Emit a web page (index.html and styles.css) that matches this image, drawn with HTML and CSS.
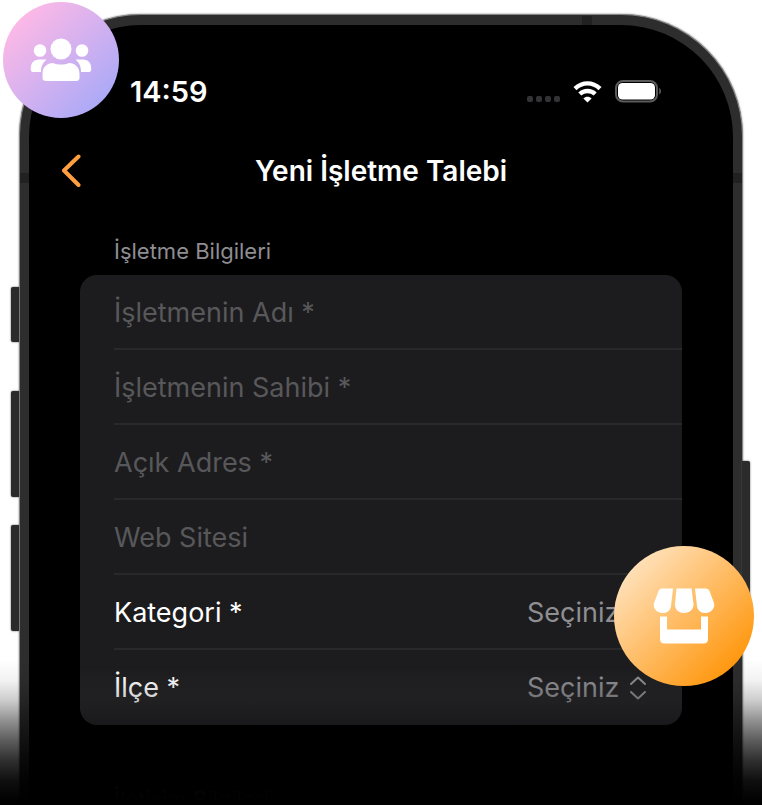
FILE: index.html
```html
<!DOCTYPE html>
<html lang="tr">
<head>
<meta charset="utf-8">
<meta name="viewport" content="width=device-width, initial-scale=1">
<title>Yeni İşletme Talebi</title>
<link rel="stylesheet" href="styles.css">
</head>
<body>
<main class="stage">
  <div class="phone">
    <span class="key key-action"></span>
    <span class="key key-up"></span>
    <span class="key key-down"></span>
    <span class="key key-power"></span>
    <span class="band band-top"></span>
    <span class="band band-left"></span>
    <span class="band band-right"></span>
    <div class="screen">
      <div class="status">
        <span class="time">14:59</span>
        <svg class="dots" width="34" height="8" viewBox="0 0 34 8" fill="#333335"><rect x="0" y="1" width="6" height="6" rx="2"/><rect x="9" y="1" width="6" height="6" rx="2"/><rect x="18" y="1" width="6" height="6" rx="2"/><rect x="27" y="1" width="6" height="6" rx="2"/></svg>
        <svg class="wifi" width="30" height="22" viewBox="0 0 30 22" fill="none" stroke="#fff" stroke-width="4.400"><path d="M2 7.600C9.500.6 19.500.6 27 7.600"/><path d="M6.800 13C11.200 8.900 17.800 8.900 22.200 13"/><path d="M14.500 21.600L10.400 17.500C12.700 15.300 16.300 15.300 18.600 17.500Z" fill="#fff" stroke="none"/></svg>
        <svg class="battery" width="47" height="24" viewBox="0 0 47 24"><rect x="1" y="1" width="41" height="20.500" rx="7" fill="none" stroke="#5c5a5c" stroke-width="2"/><rect x="3" y="3" width="37" height="16.500" rx="4.500" fill="#fff"/><path d="M44.200 8C46.600 9.300 46.600 13.200 44.200 14.500Z" fill="#5c5a5c"/></svg>
      </div>
      <header class="nav">
        <button class="back" type="button" aria-label="Geri"><svg width="22" height="34" viewBox="0 0 22 34" fill="none" stroke="#ff9f40" stroke-width="4" stroke-linecap="round" stroke-linejoin="round"><path d="M17.500 2.500L3 16.500L17.500 31"/></svg></button>
        <h1>Yeni İşletme Talebi</h1>
      </header>
      <form>
        <h2>İşletme Bilgileri</h2>
        <div class="card">
          <div class="row"><input type="text" placeholder="İşletmenin Adı *" aria-label="İşletmenin Adı"></div>
          <div class="row"><input type="text" placeholder="İşletmenin Sahibi *" aria-label="İşletmenin Sahibi"></div>
          <div class="row"><input type="text" placeholder="Açık Adres *" aria-label="Açık Adres"></div>
          <div class="row"><input type="text" placeholder="Web Sitesi" aria-label="Web Sitesi"></div>
          <div class="row">
            <label for="category">Kategori *</label>
            <select id="category"><option>Seçiniz</option></select>
            <svg width="18" height="24" viewBox="0 0 18 24" fill="none" stroke="#8e8e93" stroke-width="2" stroke-linecap="round" stroke-linejoin="round"><path d="M2 8L9 1.500L16 8M2 16L9 22.500L16 16"/></svg>
          </div>
          <div class="row">
            <label for="district">İlçe *</label>
            <select id="district"><option>Seçiniz</option></select>
            <svg width="18" height="24" viewBox="0 0 18 24" fill="none" stroke="#8e8e93" stroke-width="2" stroke-linecap="round" stroke-linejoin="round"><path d="M2 8L9 1.500L16 8M2 16L9 22.500L16 16"/></svg>
          </div>
        </div>
        <h2 class="next">İletişim Bilgileri</h2>
      </form>
    </div>
  </div>
  <div class="fade"></div>
  <div class="badge people">
    <svg width="62" height="44" viewBox="0 0 62 44" fill="#fff"><circle cx="31" cy="11" r="10.500"/><circle cx="10" cy="12.500" r="6.300"/><circle cx="52" cy="12.500" r="6.300"/><path d="M16 43C14 43 12.500 42 12.500 40V36C12.500 29 17 25 23 25C28 27 34 27 39 25C45 25 49.500 29 49.500 36V40C49.500 42 48 43 46 43Z"/><path d="M11 34H3C1.500 34 .8 33 .8 31.500V30C.8 25 4 21.500 9 21.500H16.500C13 24.500 11 28 11 34Z"/><path d="M51 34H59C60.500 34 61.200 33 61.200 31.500V30C61.200 25 58 21.500 53 21.500H45.500C49 24.500 51 28 51 34Z"/></svg>
  </div>
  <div class="badge store">
    <svg width="62" height="56" viewBox="0 0 62 56" fill="#fff"><path d="M9 .5H20L18 18C17.500 22 14.500 25 10.500 25C4 25-.5 20 1 15L5.500 3C6 1.500 7.500.5 9 .5Z"/><path d="M23.500.5H38.500L40.500 16C41 21 36.500 25 31 25C25.500 25 21.500 21 22 16Z"/><path d="M42 .5H53C54.500.5 56 1.500 56.500 3L61 15C62.500 20 58 25 51.500 25C47.500 25 44.500 22 44 18Z"/><path d="M7 28.500H14V41.500H48V28.500H55V51C55 54 53.500 55.500 50.500 55.500H11.500C8.500 55.500 7 54 7 51Z"/></svg>
  </div>
</main>
</body>
</html>
```
FILE: styles.css
```css
* {
  box-sizing: border-box;
}

body {
  margin: 0;
  background: #fff;
  font-family: Inter, "Liberation Sans", sans-serif;
}

.stage {
  position: relative;
  height: 100vh;
  padding: 14px 19px 0;
  overflow: hidden;
}

.phone {
  position: relative;
  min-height: 100vh;
  padding: 10px 9px 0;
  border: 1px solid #858585;
  border-bottom: 0;
  border-radius: 122px 122px 0 0;
  background: #2d2d2d;
  box-shadow: 0 0 2px #777;
}

.screen {
  min-height: 100vh;
  border-radius: 112px 112px 0 0;
  background: #000;
  color: #fff;
}

/* Side keys and antenna bands of the device frame */
.key {
  position: absolute;
  width: 8px;
  background: #2b2b2b;
  box-shadow: 0 0 2px #555;
}

.key-action,
.key-up,
.key-down {
  left: -9px;
  border-radius: 2px 0 0 2px;
}

.key-action {
  top: 272px;
  height: 55px;
}

.key-up {
  top: 376px;
  height: 106px;
}

.key-down {
  top: 510px;
  height: 106px;
}

.key-power {
  top: 446px;
  right: -8px;
  height: 172px;
  border-radius: 0 2px 2px 0;
}

.band {
  position: absolute;
  background: #212121;
}

.band-top {
  top: 1px;
  right: 150px;
  width: 10px;
  height: 9px;
}

.band-left,
.band-right {
  top: 158px;
  width: 9px;
  height: 10px;
}

.band-left {
  left: 0;
}

.band-right {
  right: 0;
}

.status {
  display: flex;
  align-items: center;
  padding: 50px 71px 0 101px;
}

.time {
  flex: 1;
  font-size: 29px;
  font-weight: 600;
  line-height: 34px;
}

.dots {
  margin: 14px 12px 0 0;
}

.wifi {
  margin-right: 12px;
}

.nav {
  display: grid;
  grid-template-columns: 40px 1fr 40px;
  align-items: center;
  margin-top: 45px;
  padding: 0 32px;
}

.back {
  display: flex;
  padding: 0;
  border: 0;
  background: none;
}

h1 {
  margin: 0;
  font-size: 28px;
  font-weight: 600;
  line-height: 34px;
  text-align: center;
  white-space: nowrap;
}

form {
  padding: 49px 51px 0;
}

h2 {
  margin: 0 0 10px;
  padding-left: 34px;
  color: #8e8e93;
  font-size: 22px;
  font-weight: 400;
  line-height: 28px;
}

.card {
  border-radius: 17px;
  background: linear-gradient(#1c1c1e 87%, #303033);
}

.row {
  display: flex;
  align-items: center;
  height: 75px;
  margin-left: 34px;
  padding: 2px 35px 0 0;
  border-bottom: 2px solid #29292b;
  font-size: 27px;
}

.row:last-child {
  border-bottom-color: transparent;
}

.row label {
  flex: 1;
}

.row input,
.row select {
  padding: 0;
  border: 0;
  outline: 0;
  background: none;
  font: inherit;
}

.row input {
  width: 100%;
  color: #fff;
}

.row input::placeholder {
  color: #58585b;
  opacity: 1;
}

.row select {
  margin-right: 9px;
  appearance: none;
  color: #8e8e93;
}

.next {
  margin-top: 60px;
}

.fade {
  position: absolute;
  inset: auto 0 0;
  height: 145px;
  background: linear-gradient(
    rgb(0 0 0 / 0),
    rgb(0 0 0 / 0.05) 14%,
    rgb(0 0 0 / 0.2) 28%,
    rgb(0 0 0 / 0.42) 41%,
    rgb(0 0 0 / 0.63) 55%,
    rgb(0 0 0 / 0.81) 69%,
    rgb(0 0 0 / 0.94) 83%,
    #000 98%
  );
  pointer-events: none;
}

.badge {
  position: absolute;
  display: flex;
  align-items: center;
  justify-content: center;
  border-radius: 50%;
}

.people {
  top: 2px;
  left: 3px;
  width: 116px;
  height: 116px;
  background: linear-gradient(135deg, #ffb9e6 12%, #aaa9f8 88%);
}

.store {
  top: 546px;
  right: 8px;
  width: 140px;
  height: 140px;
  background: linear-gradient(135deg, #ffe2bd 12%, #ff9810 85%);
}
```
